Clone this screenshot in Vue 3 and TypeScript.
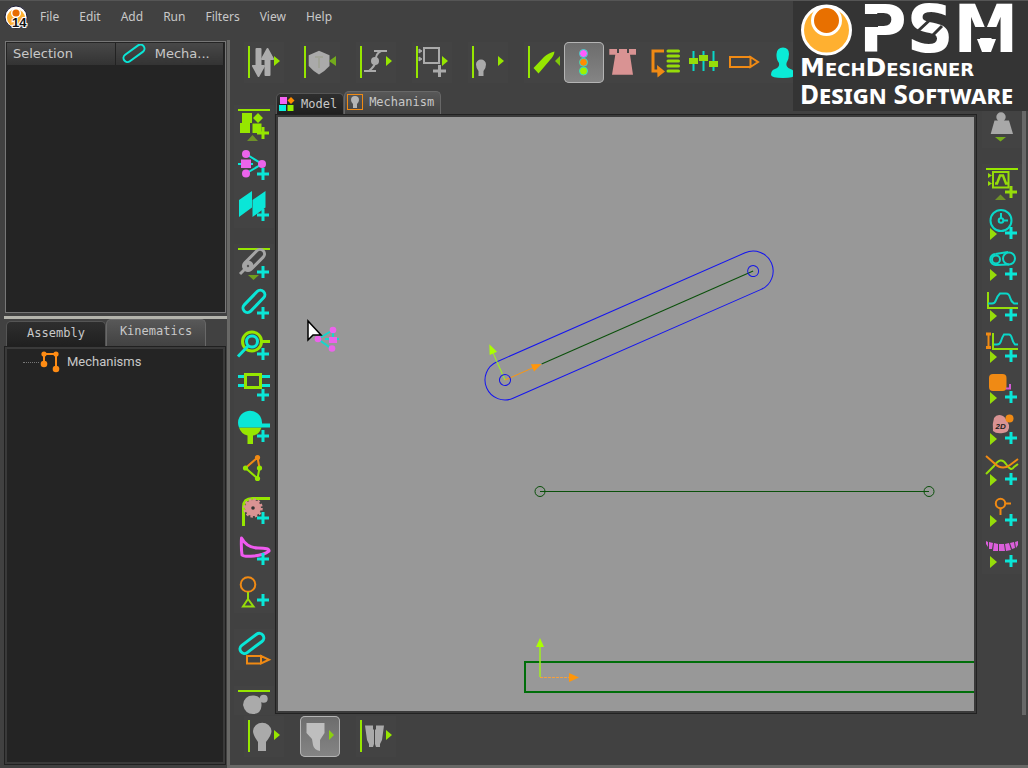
<script setup lang="ts">
import { ref } from 'vue'

interface Tool { id: string; label: string; gap?: boolean; checked?: boolean; line?: boolean; more?: 'right' }

const menus: string[] = ['File', 'Edit', 'Add', 'Run', 'Filters', 'View', 'Help']

const topTools = ref<Tool[]>([
  { id: 'sort', label: 'Reorder', line: true, more: 'right' },
  { id: 'shield', label: 'Standard parts', line: true, gap: true },
  { id: 'joint', label: 'Joints', line: true, gap: true, more: 'right' },
  { id: 'block', label: 'Add block', line: true, gap: true, more: 'right' },
  { id: 'lamp', label: 'Display', line: true, gap: true, more: 'right' },
  { id: 'knife', label: 'Tools', line: true, gap: true },
  { id: 'lights', label: 'Rebuild status', checked: true },
  { id: 'dress', label: 'Model appearance' },
  { id: 'order', label: 'Evaluation order' },
  { id: 'sliders', label: 'Settings' },
  { id: 'pencil', label: 'Edit' },
  { id: 'person', label: 'Account' },
])

const leftTools: Tool[] = [
  { id: 'assembly', label: 'Add model' },
  { id: 'mechanism', label: 'Add mechanism' },
  { id: 'planes', label: 'Add plane' },
  { id: 'greylink', label: 'Kinematic elements', gap: true },
  { id: 'part', label: 'Add part' },
  { id: 'pin', label: 'Add pin joint' },
  { id: 'slide', label: 'Add slide joint' },
  { id: 'ballslide', label: 'Add motion part' },
  { id: 'dyad', label: 'Add dyad' },
  { id: 'gear', label: 'Add gear' },
  { id: 'cam', label: 'Add cam' },
  { id: 'point', label: 'Add point' },
  { id: 'editpart', label: 'Edit part', gap: true },
  { id: 'blob', label: 'Solids', gap: true },
]

const rightTools: Tool[] = [
  { id: 'weight', label: 'Forces' },
  { id: 'functions', label: 'Function blocks', gap: true },
  { id: 'clock', label: 'Add linear motion' },
  { id: 'belt', label: 'Add gearing' },
  { id: 'motion', label: 'Add motion' },
  { id: 'measure', label: 'Add motion point' },
  { id: 'pad', label: 'Add point data' },
  { id: 'cam2d', label: 'Add 2D cam data' },
  { id: 'curves', label: 'Add math function' },
  { id: 'probe', label: 'Add measurement' },
  { id: 'teeth', label: 'Add pattern' },
]

const bottomTools: Tool[] = [
  { id: 'bulb', label: 'Show', line: true, more: 'right' },
  { id: 'filter', label: 'Filter', gap: true, checked: true },
  { id: 'trousers', label: 'Layers', line: true, gap: true, more: 'right' },
]

const sideTab = ref<'assembly' | 'kinematics'>('kinematics')
const docTab = ref<'model' | 'mechanism'>('mechanism')
</script>

<template>
  <svg class="library" aria-hidden="true">
    <defs>
      <path id="plus" d="M23 28h12M29 22v12" stroke-width="3" fill="none" />
      <path id="play" d="M8 23l7 6-7 6z" fill="#96dc0a" />
      <path id="arrow" d="M30 14l6 5-6 5z" fill="#96e600" />

      <symbol id="sort" viewBox="0 0 40 41">
        <g fill="#acacac" stroke="#acacac" stroke-width="2" stroke-linejoin="round">
          <path d="M12.500 7h4v17h3.500l-5.500 10-5.500-10h3.500z" />
          <path d="M21.500 33V17H18l5.500-10L29 17h-3.500v16z" />
        </g>
      </symbol>
      <symbol id="shield" viewBox="0 0 40 41">
        <path d="M19 8.700l10.500 4.500V24Q25 29 19 32.500 13 29 8.700 24V13.200z" fill="#aaa" />
        <path d="M15 15h8M19 15v11" stroke="#a1a398" stroke-width="2" fill="none" />
        <path d="M36 14l-7 5 7 5z" fill="#73aa1c" />
      </symbol>
      <symbol id="joint" viewBox="0 0 40 41">
        <path d="M18 9h13M8 29h12M25 9Q19 12 20 19 19 24 13 29" stroke="#aaa" stroke-width="2" fill="none" />
        <circle cx="19" cy="19" r="4" fill="#aaa" />
      </symbol>
      <symbol id="block" viewBox="0 0 40 41">
        <rect x="12" y="6" width="15" height="15" stroke="#aaa" stroke-width="2" fill="none" />
        <path d="M7 7l3 2-3 2zM7 15l3 2-3 2z" fill="#aaa" stroke="#aaa" />
        <path d="M21 29h13M27.500 23v12" stroke="#aaa" stroke-width="3" />
      </symbol>
      <symbol id="lamp" viewBox="0 0 40 41">
        <path d="M10.500 34v-5Q8 26 8 22.500a5 5 0 0 1 10 0q0 3.500-2.500 6.500v5z" fill="#aaa" />
      </symbol>
      <symbol id="knife" viewBox="0 0 40 41">
        <path d="M9.500 26L20 15Q24 11 30.500 9.500 30 14 26 18L14.500 31.500z" fill="#96e600" />
        <path d="M36 14l-5 5 5 5z" fill="#80c80a" />
      </symbol>
      <symbol id="lights" viewBox="0 0 40 41">
        <g stroke="#36d9c4">
          <circle cx="19.500" cy="11.500" r="4" fill="#ff5cff" />
          <circle cx="19.500" cy="20.300" r="4" fill="#ff8c00" />
          <circle cx="19.500" cy="29" r="4" fill="#a0f000" />
        </g>
      </symbol>
      <symbol id="dress" viewBox="0 0 40 41">
        <path d="M5.300 7H13v4h2V7h8v4h2V7h7v5.700h-6l3 20H8l3.300-20h-6z" fill="#d99393" />
      </symbol>
      <symbol id="order" viewBox="0 0 40 41">
        <path d="M20 9H9v20h5" stroke="#f08a14" stroke-width="3" fill="none" />
        <path d="M13 23l8 6.500-7.500 6z" fill="#f08a14" />
        <path d="M24 9h10.500M24 14h10.500M24 19h10.500M24 24h10.500M24 29h10.500" stroke="#96dc0a" stroke-width="3" stroke-linecap="round" />
      </symbol>
      <symbol id="sliders" viewBox="0 0 40 41">
        <path d="M9.500 9v20M19.500 9v20M29.500 9v20" stroke="#0ad7c8" stroke-width="2" />
        <path d="M5 16h9v6H5zM15 13h9v6h-9zM25 19h9v6h-9z" fill="#96dc0a" />
      </symbol>
      <symbol id="pencil" viewBox="0 0 40 41">
        <path d="M6 15h20.500v10H6zM26.500 15L34 20l-7.500 5z" stroke="#f08a14" stroke-width="2" fill="none" />
      </symbol>
      <symbol id="person" viewBox="0 0 40 41">
        <path d="M7 33q0-5 4-6 5-2 4-6-3-4-2.500-9Q13 5.500 19 5.500T25 12q0 5-2.500 9-1 4 4 6 4 1 4 6 0 3-11.500 3T7 33" fill="#0aebd7" />
      </symbol>

      <symbol id="assembly" viewBox="0 0 40 41">
        <path d="M4 4h32v2H4zM8 8h10v10H8zM24 8l5 5-5 5-5-5zM6 18h10v10H6zM18.500 18.500h9V28h-9z" fill="#96e600" />
        <use href="#plus" stroke="#96e600" />
        <path d="M13 36l5.500-6 5.500 6z" fill="#6f9128" />
      </symbol>
      <symbol id="mechanism" viewBox="0 0 40 41">
        <path d="M12 8l16 10-16 9.500M4 18h15" stroke="#0ae6d7" stroke-width="2" fill="none" />
        <g fill="#eb64eb">
          <circle cx="12" cy="8" r="4" /><circle cx="28" cy="18" r="4" /><circle cx="12" cy="27.500" r="4" />
          <path d="M7 13.500h10v8.500H7z" />
        </g>
        <use href="#plus" stroke="#0ae6d7" />
      </symbol>
      <symbol id="planes" viewBox="0 0 40 41">
        <path d="M5 13L18 4v16.500L5 30zM18.500 13l13-9v16.500l-13 9.500z" fill="#0ae6d7" />
        <use href="#plus" stroke="#0ae6d7" />
      </symbol>
      <symbol id="greylink" viewBox="0 0 40 41">
        <path d="M4 4h32v2H4z" fill="#96e600" />
        <g stroke="#a5a5a5" stroke-width="3" fill="none">
          <rect x="-4.500" y="-4.500" width="26" height="9" rx="4.500" transform="translate(14 22) rotate(-45)" />
          <path d="M14 22l-8 8" />
        </g>
        <circle cx="14" cy="22" r="5.500" fill="#a5a5a5" /><circle cx="14" cy="22" r="1.200" fill="#555" />
        <use href="#plus" stroke="#0ae6d7" />
        <path d="M14 31h11l-5.500 5z" fill="#6f9e1e" />
      </symbol>
      <symbol id="part" viewBox="0 0 40 41">
        <rect x="-4.500" y="-4.500" width="27.500" height="9" rx="4.500" transform="translate(13.500 23) rotate(-46)" stroke="#0ae6d7" stroke-width="3" fill="none" />
        <use href="#plus" stroke="#0ae6d7" />
      </symbol>
      <symbol id="pin" viewBox="0 0 40 41">
        <circle cx="18" cy="15.500" r="9.500" stroke="#96e600" stroke-width="3" fill="none" />
        <path d="M28 15.500h8" stroke="#96e600" stroke-width="3" />
        <circle cx="18" cy="15.500" r="5.500" stroke="#0ae6d7" stroke-width="3" fill="none" />
        <path d="M14 20L4 30.500" stroke="#0ae6d7" stroke-width="3" />
        <use href="#plus" stroke="#0ae6d7" />
      </symbol>
      <symbol id="slide" viewBox="0 0 40 41">
        <path d="M4 9.500h32M4 18.500h32" stroke="#0ae6d7" stroke-width="3" />
        <rect x="11.500" y="7.500" width="15" height="13" stroke="#96e600" stroke-width="3" fill="#414141" />
        <use href="#plus" stroke="#0ae6d7" />
      </symbol>
      <symbol id="ballslide" viewBox="0 0 40 41">
        <path d="M5 19.500h22.500Q25 27 19 27.500V36h-5.500v-8.500Q7 26 5 19.500" fill="#96e600" />
        <path d="M5 19.500a12 12 0 1 1 23-4h8v4z" fill="#0ae6d7" />
        <use href="#plus" stroke="#0ae6d7" />
      </symbol>
      <symbol id="dyad" viewBox="0 0 40 41">
        <path d="M11.500 19l12-10.500 2 10.500" stroke="#f08a14" stroke-width="2" fill="none" />
        <path d="M11.500 19l12 10.500 2-10.500" stroke="#96e600" stroke-width="2" fill="none" />
        <circle cx="23.500" cy="8.500" r="2.600" fill="#f08a14" />
        <g fill="#96e600"><circle cx="11.500" cy="19" r="2.600" /><circle cx="25.500" cy="19" r="2.600" /><circle cx="23.500" cy="29.500" r="2.600" /></g>
      </symbol>
      <symbol id="gear" viewBox="0 0 40 41">
        <path d="M9.500 36V17q0-8.500 9-8.500H36" stroke="#96e600" stroke-width="3" fill="none" />
        <circle cx="19" cy="18" r="8" fill="#d99393" />
        <circle cx="19" cy="18" r="8.500" stroke="#d99393" stroke-width="2.500" stroke-dasharray="2.500 1.950" fill="none" />
        <circle cx="19" cy="18" r="1.800" fill="#333" />
        <use href="#plus" stroke="#0ae6d7" />
      </symbol>
      <symbol id="cam" viewBox="0 0 40 41">
        <path d="M7.500 7Q13 17 24 17q12 0 11 3Q30 24 20 25T8 24Q7 16 7.500 7z" stroke="#f05af0" stroke-width="3" stroke-linejoin="round" fill="none" />
        <use href="#plus" stroke="#0ae6d7" />
      </symbol>
      <symbol id="point" viewBox="0 0 40 41">
        <circle cx="14" cy="12.500" r="7.300" stroke="#f08a14" stroke-width="2" fill="none" />
        <path d="M14 20v7l-5 7.500h10.500L14 27" stroke="#96dc0a" stroke-width="2" fill="none" />
        <use href="#plus" stroke="#0ae6d7" />
      </symbol>
      <symbol id="editpart" viewBox="0 0 40 41">
        <rect x="-4.500" y="-4.500" width="27.500" height="9" rx="4.500" transform="translate(10.500 20) rotate(-37)" stroke="#0ae6d7" stroke-width="3" fill="none" />
        <path d="M13 27h14v7.500H13zM27 27l8 3.700-8 3.800z" stroke="#f08a14" stroke-width="2" fill="none" />
      </symbol>
      <symbol id="blob" viewBox="0 0 40 41">
        <path d="M4 4h32v2H4z" fill="#96e600" />
        <path d="M9 19q1-9.500 10-9.500t8.500 10q-.5 8.500-8.500 8.500T9 19" fill="#aaa" />
        <circle cx="29.700" cy="12.700" r="4" fill="#aaa" />
      </symbol>

      <symbol id="weight" viewBox="0 0 40 41">
        <circle cx="19" cy="10" r="4.700" fill="#a8a8a8" />
        <path d="M12.500 13.500h14.500L31 27H8.700z" fill="#a8a8a8" />
        <path d="M13 30h11l-5.500 4.500z" fill="#76ac1c" />
      </symbol>
      <symbol id="functions" viewBox="0 0 40 41">
        <path d="M4 4h32v2H4z" fill="#96e600" />
        <rect x="11" y="8" width="15.500" height="15.500" stroke="#96dc0a" stroke-width="2" fill="none" />
        <path d="M13 19.500h2l3-8h3l3 8h2" stroke="#96dc0a" stroke-width="2.500" fill="none" />
        <path d="M6 9l4 2.500L6 14zM6 17l4 2.500L6 22z" fill="#96dc0a" />
        <use href="#plus" stroke="#96dc0a" />
        <path d="M13 36l5.500-5.500L24 36z" fill="#6f9128" />
      </symbol>
      <symbol id="clock" viewBox="0 0 40 41">
        <g stroke="#0ad7c8" stroke-width="2" fill="none">
          <circle cx="19" cy="15.500" r="10.500" /><circle cx="19" cy="15.500" r="2.300" /><path d="M19 8v5M21.500 15.500H26" />
        </g>
        <use href="#play" /><use href="#plus" stroke="#0ae6d7" />
      </symbol>
      <symbol id="belt" viewBox="0 0 40 41">
        <g stroke="#0ad7c8" stroke-width="2" fill="none">
          <circle cx="14" cy="13.500" r="4" /><circle cx="27" cy="12.500" r="6" />
          <path d="M13.500 8L26 6M14 19l13-.5" />
          <path d="M13.500 8a5.500 5.500 0 0 0 .5 11" />
        </g>
        <use href="#play" /><use href="#plus" stroke="#0ae6d7" />
      </symbol>
      <symbol id="motion" viewBox="0 0 40 41">
        <path d="M6 5v16h30" stroke="#96dc0a" stroke-width="2" fill="none" />
        <path d="M6 16.500h4Q13 16.500 14 13T18 6.500h6Q27 6.500 28 10.500T32 16.500h4" stroke="#0ad7c8" stroke-width="2" fill="none" />
        <use href="#play" /><use href="#plus" stroke="#0ae6d7" />
      </symbol>
      <symbol id="measure" viewBox="0 0 40 41">
        <path d="M4 6h5M4 19.500h5" stroke="#f08a14" stroke-width="3" /><path d="M6.500 5v15" stroke="#f08a14" stroke-width="2" />
        <path d="M11 5v16h25" stroke="#96dc0a" stroke-width="2" fill="none" />
        <path d="M12 16.500h3Q18 16.500 19 13T22 6.500h5Q29 6.500 30 10.500T33 16.500h3" stroke="#0ad7c8" stroke-width="2" fill="none" />
        <use href="#play" /><use href="#plus" stroke="#0ae6d7" />
      </symbol>
      <symbol id="pad" viewBox="0 0 40 41">
        <rect x="7" y="5" width="17.500" height="17" rx="4" fill="#f08a14" />
        <path d="M28 15v4.500h-4" stroke="#d25ad2" stroke-width="2" fill="none" />
        <use href="#play" /><use href="#plus" stroke="#0ae6d7" />
      </symbol>
      <symbol id="cam2d" viewBox="0 0 40 41">
        <path d="M12 8q3-4.500 9-2 3 2 6 9 1 7-6 8-7 1-10-2-1-7 1-13" fill="#d99393" />
        <text x="13.500" y="19" class="tiny">2D</text>
        <circle cx="27.500" cy="8.500" r="4" fill="#f08a14" />
        <use href="#play" /><use href="#plus" stroke="#0ae6d7" />
      </symbol>
      <symbol id="curves" viewBox="0 0 40 41">
        <path d="M4 23l8-8q7-10 12-2 5 8 8 3l4-3" stroke="#96dc0a" stroke-width="2" fill="none" />
        <path d="M4 5l8 7q8 8 16 2l8-6" stroke="#f08a14" stroke-width="2" fill="none" />
        <use href="#play" /><use href="#plus" stroke="#0ae6d7" />
      </symbol>
      <symbol id="probe" viewBox="0 0 40 41">
        <circle cx="18.500" cy="11.500" r="4.700" stroke="#f08a14" stroke-width="2" fill="none" />
        <path d="M23 11.500h6M18.500 16v7" stroke="#f08a14" stroke-width="2" />
        <use href="#play" /><use href="#plus" stroke="#0ae6d7" />
      </symbol>
      <symbol id="teeth" viewBox="0 0 40 41">
        <path d="M4 8l2 1v5l-2-3zM7 9l4 1-1 6H7zM12 10l4 1v7h-5zM17 11h5l1 7h-6zM23 11l4-1 2 7-5 1zM28 10l4-1 1 6-3 1zM33 9l3-1v4l-2 3z" fill="#dc5fdc" />
        <use href="#play" /><use href="#plus" stroke="#0ae6d7" />
      </symbol>

      <symbol id="bulb" viewBox="0 0 40 41">
        <path d="M14 35v-9Q9 19 9 15a9.300 9.300 0 0 1 18.500 0q0 4-5.500 11v9z" fill="#aaa" />
      </symbol>
      <symbol id="filter" viewBox="0 0 40 41">
        <path d="M6.500 7h18v10L20 24v11q-6-1-7-6l-1-6-5.500-6z" fill="#bebebe" />
        <path d="M29 14l5 5-5 5z" fill="#8bd00f" />
      </symbol>
      <symbol id="trousers" viewBox="0 0 40 41">
        <path d="M9 9.500h8v4h1V28l-1 3h-4v-3l-2-4zM28 9.500h-8v4h-1V28l1 3h4v-3l2-4z" fill="#aaa" />
      </symbol>
    </defs>
  </svg>

  <div class="app">
    <header class="menubar">
      <svg class="appicon" width="24" height="24" viewBox="0 0 24 24" aria-hidden="true">
        <circle cx="12" cy="12" r="11" fill="#fff" stroke="#1d1d38" />
        <circle cx="12" cy="13" r="9" fill="#ffb030" />
        <circle cx="12" cy="8" r="5" fill="#fff" /><circle cx="12" cy="8" r="3.600" fill="#e86c00" />
        <text x="8" y="22" class="version">14</text>
      </svg>
      <nav class="menus">
        <button v-for="m in menus" :key="m" type="button" class="menu">{{ m }}</button>
      </nav>
    </header>

    <aside class="sidebar">
      <section class="selection">
        <table class="seltable">
          <thead>
            <tr>
              <th scope="col">Selection</th>
              <th scope="col">
                <span class="cellflex">
                  <svg width="24" height="20" viewBox="0 0 24 20" aria-hidden="true">
                    <rect x="-4" y="-4" width="24" height="8" rx="4" transform="translate(5.500 14) rotate(-36)" stroke="#0ae6d7" stroke-width="2" fill="none" />
                  </svg>
                  <span>Mecha...</span>
                </span>
              </th>
            </tr>
          </thead>
        </table>
      </section>
      <div class="splitter"></div>
      <div class="sidetabs" role="tablist">
        <button type="button" role="tab" class="tab" :class="{ active: sideTab === 'assembly' }" :aria-selected="sideTab === 'assembly'" @click="sideTab = 'assembly'">Assembly</button>
        <button type="button" role="tab" class="tab" :class="{ active: sideTab === 'kinematics' }" :aria-selected="sideTab === 'kinematics'" @click="sideTab = 'kinematics'">Kinematics</button>
      </div>
      <section class="tree">
        <ul class="nodes">
          <li class="node">
            <span class="branch"></span>
            <svg width="22" height="24" viewBox="0 0 22 24" aria-hidden="true">
              <path d="M5 14V4h12v15" stroke="#ff8c14" stroke-width="2" fill="none" />
              <g fill="#ff8c14"><circle cx="5" cy="4" r="2.600" /><circle cx="17" cy="4" r="2.600" /><circle cx="5" cy="14" r="3.300" /><circle cx="17" cy="19" r="3.300" /></g>
            </svg>
            <span>Mechanisms</span>
          </li>
        </ul>
      </section>
    </aside>

    <main class="work">
      <div class="toolbar">
        <button v-for="t in topTools" :key="t.id" type="button" class="tool" :class="{ gap: t.gap, checked: t.checked }" :aria-label="t.label">
          <svg width="40" height="41" viewBox="0 0 40 41" aria-hidden="true">
            <path v-if="t.line" d="M4 4h2v32H4z" fill="#96e600" />
            <use :href="'#' + t.id" width="40" height="41" />
            <use v-if="t.more" href="#arrow" />
          </svg>
        </button>
      </div>

      <div class="middle">
        <div class="column left">
          <button v-for="t in leftTools" :key="t.id" type="button" class="tool" :class="{ gap: t.gap }" :aria-label="t.label">
            <svg width="40" height="41" viewBox="0 0 40 41" aria-hidden="true"><use :href="'#' + t.id" width="40" height="41" /></svg>
          </button>
        </div>

        <section class="document">
          <div class="doctabs" role="tablist">
            <button type="button" role="tab" class="tab doc" :class="{ active: docTab === 'model' }" :aria-selected="docTab === 'model'" @click="docTab = 'model'">
              <svg width="16" height="16" viewBox="0 0 16 16" aria-hidden="true">
                <path d="M1 1h7v7H1z" fill="#f564f5" /><path d="M12 1l3.500 3.500L12 8 8.500 4.500z" fill="#ff8c00" />
                <path d="M0 9h7v6H0z" fill="#0af0e1" /><path d="M8.500 9h6v6h-6z" fill="#96f000" />
              </svg>
              Model
            </button>
            <button type="button" role="tab" class="tab doc" :class="{ active: docTab === 'mechanism' }" :aria-selected="docTab === 'mechanism'" @click="docTab = 'mechanism'">
              <svg width="16" height="16" viewBox="0 0 16 16" aria-hidden="true">
                <rect x=".5" y=".5" width="15" height="15" fill="none" stroke="#f08a14" />
                <path d="M6 14v-4Q4 8 4 6a4 4 0 0 1 8 0q0 2-2 4v4z" fill="#b4b4b4" />
              </svg>
              Mechanism
            </button>
          </div>
          <div class="frame">
            <svg class="canvas" role="img" aria-label="Mechanism drawing">
              <g fill="none">
                <g transform="translate(227 263) rotate(-23.700)">
                  <rect x="-20" y="-20" width="311" height="40" rx="20" stroke="#1414f0" />
                  <path d="M40 0h231" stroke="#0a500a" />
                  <path d="M0 0h32" stroke="#ff960a" /><path d="M30 -4l10 4-10 4z" fill="#ff960a" />
                  <path d="M0 0v-32" stroke="#a0f01e" /><path d="M-4 -29l4-10 4 10z" fill="#aaff00" />
                  <circle r="5.500" stroke="#1414e6" /><circle cx="271" r="5.500" stroke="#1414e6" />
                </g>
                <path d="M262 374.500h389" stroke="#0a500a" />
                <circle cx="262" cy="374.500" r="5" stroke="#0a500a" /><circle cx="651" cy="374.500" r="5" stroke="#0a500a" />
                <rect x="247" y="545" width="100%" height="30" stroke="#006e0a" stroke-width="2" />
                <path d="M262 560v-30" stroke="#a0f01e" stroke-width="1.500" /><path d="M258 530l4-9 4 9z" fill="#aaff00" />
                <path d="M262 560.500h30" stroke="#f5a03c" stroke-dasharray="3 1" /><path d="M291 556l10 4.500-10 4.500z" fill="#ff960a" />
                <path d="M55 213l-15 9 14 10M47 222h14M55 216v4" stroke="#14d7cd" stroke-width="2" />
                <g fill="#eb64eb"><circle cx="55" cy="213" r="3.300" /><circle cx="40" cy="222" r="3.300" /><circle cx="54" cy="231.500" r="3.300" /><path d="M51 220h8v6h-8z" /></g>
                <path d="M30 204v19l5-5h8z" fill="#fff" stroke="#000" stroke-width="1.500" />
              </g>
            </svg>
          </div>
        </section>

        <div class="column right">
          <button v-for="t in rightTools" :key="t.id" type="button" class="tool" :class="{ gap: t.gap }" :aria-label="t.label">
            <svg width="40" height="41" viewBox="0 0 40 41" aria-hidden="true"><use :href="'#' + t.id" width="40" height="41" /></svg>
          </button>
        </div>
      </div>

      <div class="toolbar bottom">
        <button v-for="t in bottomTools" :key="t.id" type="button" class="tool" :class="{ gap: t.gap, checked: t.checked }" :aria-label="t.label">
          <svg width="40" height="41" viewBox="0 0 40 41" aria-hidden="true">
            <path v-if="t.line" d="M4 4h2v32H4z" fill="#96e600" />
            <use :href="'#' + t.id" width="40" height="41" />
            <use v-if="t.more" href="#arrow" />
          </svg>
        </button>
      </div>
    </main>

    <div class="brand">
      <svg width="235" height="55" viewBox="0 0 235 55" role="img" aria-label="PSM">
        <circle cx="33.500" cy="30" r="24" fill="#ffb030" stroke="#fff" stroke-width="3" />
        <circle cx="33.500" cy="20.500" r="14" fill="#e87000" stroke="#fff" stroke-width="3" />
        <text x="66" y="52" class="psm">PSM</text>
        <path d="M66 14h19v13H66zM180 27h27v11h-27z" fill="#343434" />
        <path d="M125 31l14-13M136 39l13-13" stroke="#343434" stroke-width="3" />
        <path d="M184 39h19l-5 13h-9z" fill="#fff" />
      </svg>
      <p class="product">MechDesigner</p>
      <p class="tagline">Design Software</p>
    </div>
  </div>
</template>

<style>
html, body { margin: 0; background: #414141; }
</style>

<style scoped>
* { box-sizing: border-box; }
.library { position: absolute; width: 0; height: 0; }
.app {
  position: relative;
  height: 100vh;
  display: grid;
  grid-template-columns: 227px minmax(0, 1fr);
  grid-template-rows: 39px minmax(0, 1fr);
  background: #414141;
  border-top: 1px solid #555;
  color: #c8c8c8;
  overflow: hidden;
}
button { margin: 0; padding: 0; border: 0; background: none; color: inherit; font: inherit; }
svg { display: block; flex: none; }

.menubar { grid-column: 1 / -1; display: flex; align-items: center; gap: 12px; padding: 0 0 7px 4px; }
.appicon { overflow: visible; }
.version { font: bold 13px/13px "Liberation Sans", sans-serif; fill: #111; stroke: #fff; stroke-width: 2px; paint-order: stroke; }
.menus { display: flex; gap: 20px; }
.menu { font: 12px/20px "Noto Sans", sans-serif; }

.sidebar { display: flex; flex-direction: column; padding: 0 0 3px 4px; min-height: 0; }
.selection { height: 272px; margin: 1px 1px 0; border: 1px solid #777; padding: 1px; background: #242424; }
.seltable { width: 100%; border-collapse: collapse; table-layout: fixed; font: 13px/22px "DejaVu Sans", sans-serif; }
.seltable th { height: 22px; padding: 0 0 0 6px; font-weight: normal; text-align: left; background: linear-gradient(#484848, #333); border-right: 1px solid #222; }
.cellflex { display: flex; align-items: center; gap: 9px; }
.splitter { height: 3px; margin: 3px 0 0; background: #b4b4ac; flex: none; }
.tab {
  font: 12px/20px "DejaVu Sans Mono", monospace;
  border: 1px solid #555;
  border-bottom: 0;
  border-radius: 5px 5px 0 0;
  background: linear-gradient(#2e2e2e, #202020);
}
.tab.active { background: linear-gradient(#585858, #424242); border-color: #686868; }
.sidetabs { display: flex; align-items: flex-end; height: 27px; padding-left: 2px; flex: none; }
.sidetabs .tab { height: 25px; width: 100px; padding-bottom: 2px; }
.sidetabs .tab.active { height: 27px; padding-bottom: 4px; }
.tree { flex: 1; min-height: 0; margin-right: 1px; border: 3px solid #3a3a3a; outline: 1px solid #202020; outline-offset: -1px; background: #242424; }
.nodes { list-style: none; margin: 0; padding: 1px 0 0 16px; font: 13px/24px Roboto, sans-serif; }
.node { display: flex; align-items: center; }
.branch { width: 16px; border-top: 1px dotted #777; }
.node svg { margin-right: 6px; }

.work { display: flex; flex-direction: column; min-width: 0; border-left: 3px solid #686866; border-bottom: 3px solid #686866; }
.toolbar { display: flex; padding: 2px 0 0 14px; height: 51px; flex: none; }
.toolbar.bottom { height: 50px; padding-top: 1px; }
.tool { display: block; width: 40px; height: 41px; flex: none; background: #434343; }
.toolbar .gap { margin-left: 16px; }
.tool.checked { background: linear-gradient(#6c6c6c, #858585); border-radius: 5px; box-shadow: inset 0 0 0 1px #b4b4b4; }

.middle { flex: 1; min-height: 0; display: flex; }
.column { display: flex; flex-direction: column; min-height: 0; overflow: hidden; flex: none; }
.column .gap { margin-top: 16px; }
.left { padding: 14px 1px 0 4px; }
.right { padding: 16px 0 0 5px; border-right: 4px solid #686868; margin-right: 2px; }
.document { flex: 1; min-width: 0; display: flex; flex-direction: column; }
.doctabs { display: flex; align-items: flex-end; height: 23px; padding-left: 1px; flex: none; }
.tab.doc { display: flex; align-items: center; gap: 6px; height: 21px; padding: 0 6px 1px 2px; }
.tab.doc.active { height: 23px; padding-bottom: 2px; }
.frame { flex: 1; min-height: 0; margin-bottom: 1px; border: 1px solid #222; padding: 2px; background: #3a3a3a; display: flex; }
.canvas { flex: 1; min-width: 0; background: #989898; }
.tiny { font: italic bold 8px "Liberation Sans", sans-serif; fill: #222; }

.brand { position: absolute; top: -1px; right: 0; width: 235px; height: 111px; background: #343434; color: #fff; }
.brand svg { overflow: visible; }
.psm { font: bold 65px "DejaVu Sans", sans-serif; fill: #fff; }
.product, .tagline { margin: 0; padding-left: 7px; font-variant: small-caps; font-weight: bold; line-height: 26px; white-space: nowrap; }
.product { font-family: "DejaVu Sans", sans-serif; font-size: 25px; }
.tagline { font-family: "Noto Sans", sans-serif; font-size: 26px; }
</style>
